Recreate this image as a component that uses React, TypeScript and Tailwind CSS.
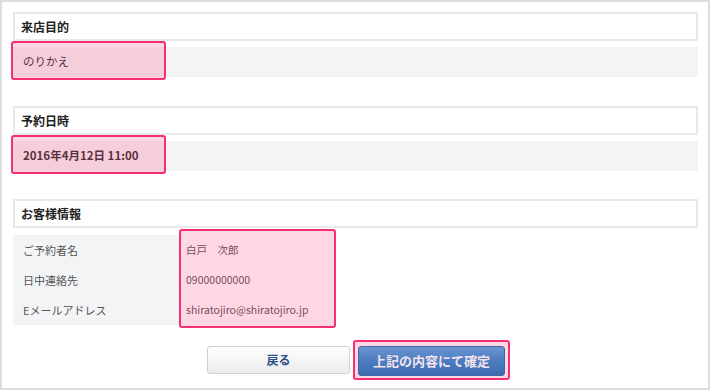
const font = { fontFamily: '"Noto Sans CJK JP", "Noto Sans", sans-serif' };

function Highlight({ className }: { className: string }) {
  return (
    <div
      className={`pointer-events-none absolute rounded-[3px] border-2 border-[#f5306e] bg-[rgba(255,45,110,0.19)] ${className}`}
    />
  );
}

function SectionHeader({ title }: { title: string }) {
  return (
    <div className="flex h-[29px] items-center border-2 border-[#e9e9e9] bg-white px-[6px] text-[12px] font-bold text-[#222]">
      {title}
    </div>
  );
}

function ValueRow({ value, bold }: { value: string; bold?: boolean }) {
  return (
    <div className="relative mt-[6px] flex h-[30px] items-center bg-[#f3f4f6] pl-[10px]">
      <Highlight className="-left-[2px] -top-[6px] h-[39px] w-[155px]" />
      <span className={`text-[11.5px] text-[#333] ${bold ? "font-bold" : ""}`}>{value}</span>
    </div>
  );
}

const customer = [
  { label: "ご予約者名", value: "白戸　次郎" },
  { label: "日中連絡先", value: "09000000000" },
  { label: "Eメールアドレス", value: "shiratojiro@shiratojiro.jp" },
];

export default function App() {
  return (
    <div
      style={font}
      className="h-[390px] w-[710px] overflow-hidden border-2 border-[#dcdcdc] bg-white pl-[11px] pr-[10px] pt-[10px]"
    >
      {/* 来店目的 */}
      <SectionHeader title="来店目的" />
      <ValueRow value="のりかえ" />

      {/* 予約日時 */}
      <div className="mt-[29px]">
        <SectionHeader title="予約日時" />
        <ValueRow value="2016年4月12日 11:00" bold />
      </div>

      {/* お客様情報 */}
      <div className="mt-[28px]">
        <SectionHeader title="お客様情報" />
        <div className="relative mt-[7px] flex flex-col">
          <Highlight className="left-[166px] -top-[6px] h-[99px] w-[157px]" />
          {customer.map((row) => (
            <div key={row.label} className="flex h-[30px] items-center text-[11px] text-[#555]">
              <div className="flex h-full w-[168px] items-center bg-[#f3f4f6] pl-[10px]">{row.label}</div>
              <div className="pl-[5px] text-[10.5px]">{row.value}</div>
            </div>
          ))}
        </div>
      </div>

      {/* Buttons */}
      <div className="mt-[21px] flex justify-center gap-[8px] pl-[1px]">
        <button className="h-[28px] w-[143px] rounded-[3px] border border-[#d0d0d0] bg-gradient-to-b from-white to-[#ececec] text-[12px] font-bold text-[#2b4f86]">
          戻る
        </button>
        <div className="relative">
          <Highlight className="-left-[5px] -top-[6px] h-[40px] w-[157px]" />
          <button className="relative h-[30px] w-[147px] rounded-[3px] border border-[#3f68a6] bg-gradient-to-b from-[#6a95d0] via-[#4c7cc0] to-[#3d6cb0] text-[13px] font-bold text-[#f3e3ee]">
            上記の内容にて確定
          </button>
        </div>
      </div>
    </div>
  );
}
